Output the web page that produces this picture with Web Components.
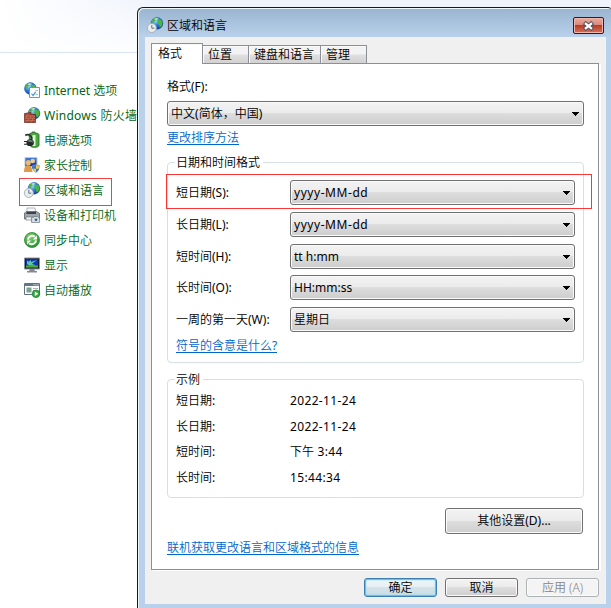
<!DOCTYPE html>
<html lang="zh-CN"><head><meta charset="utf-8"><title>区域和语言</title>
<style>
html,body{margin:0;width:611px;height:608px;overflow:hidden;background:#fff}
body{font:350 12px/16px "Noto Sans","Noto Sans CJK SC",sans-serif;color:#000}
</style></head><body>
<control-page></control-page>
<script>
const define=(name,html)=>customElements.define(name,class extends HTMLElement{
 connectedCallback(){ if(this.shadowRoot)return;
  const t=document.createElement('template');
  t.innerHTML=typeof html==='function'?html(this):html;
  this.attachShadow({mode:'open'}).append(t.content.cloneNode(true));
 }});

const globe=`<circle cx="10" cy="6.3" r="5.9" fill="url(#g)" stroke="#174f9c" stroke-width=".5"/><path d="M6 2.3Q8 .5 10 1L9.4 3 7.5 4.2 6.8 6.6 5 5.2zM11 3l3-.6 1.6 3.4-1 3.4-2 1.4-.6-3-1.8-1.6z" fill="#4eb53c"/><path d="M7 1.8Q9 .8 11.5 1.6L9 3z" fill="#d5f6cb"/>`;
const grad=`<defs><radialGradient id="g" cx=".35" cy=".3" r=".8"><stop stop-color="#9fe3ff"/><stop offset=".45" stop-color="#2c83de"/><stop offset="1" stop-color="#0a2d8c"/></radialGradient><linearGradient id="m" x2="0" y2="1"><stop stop-color="#3f86e8"/><stop offset="1" stop-color="#0a2aa0"/></linearGradient><radialGradient id="s" cx=".4" cy=".3" r=".8"><stop stop-color="#7fd568"/><stop offset="1" stop-color="#1c8a2c"/></radialGradient></defs>`;
const icons={
 internet:`<g transform="translate(-3.6 .2)">${globe}</g><path d="M5.5 5.5h10v10h-10z" fill="#fbfdff" stroke="#7892aa"/><path d="M11.5 8.5H14M11.5 12.5H14" stroke="#a9bccb"/><path d="M7.5 11.5l1.6 2 2.6-3.6" fill="none" stroke="#3e9ac9" stroke-width="1.2"/>`,
 firewall:`${globe}<path d="M.5 6.5l6.5-1v2h4.5v8H.5z" fill="#a5442f" stroke="#6d2218" stroke-width=".7"/><path d="M1 9h10M1 11.3h10M1 13.5h10M4 6.5V9M8 8v1M2.5 9v2.3M6.5 9v2.3M10 9v2.3M4.5 11.3v2.2M8.5 11.3v2.2M3 13.5v2M7 13.5v2" stroke="#d58d76" stroke-width=".5"/>`,
 power:`<path d="M5 2.6Q5 1.2 8 1V0h3v1q4 0 4 1.7V13q0 2.3-4.5 2.3T6 13z" fill="#4aa83c" stroke="#2b5930" stroke-width=".8"/><path d="M8.5 3h3v11h-3z" fill="#d8f8cd"/><path d="M1.2 3.2Q5 1.6 7 4.4t-1 4.2" fill="none" stroke="#292f32" stroke-width="1.7"/><path d="M0 9h3l1-1.5h3.6l2.2 1.8v2.9L7.6 14H4l-1.2-1.3H0v-1h2.5V10H0z" fill="#24292c"/><path d="M4.3 9h3l1.3 1" stroke="#b8bfc2" fill="none"/>`,
 family:`<path d="M1 .5h12v9H1z" fill="url(#m)" stroke="#b9c8d7"/><circle cx="4.3" cy="5.7" r="2.6" fill="#edbb69"/><path d="M0 15q0-7 4-7t4.5 7z" fill="#df9a4a"/><circle cx="8.7" cy="4" r="2.3" fill="#edc993"/><path d="M8 8.5q2.5 0 4-1 1.5 1 3.5 1 0 5-3.7 7Q8 13.5 8 8.5z" fill="#f4ce49" stroke="#7986a0" stroke-width=".6"/><path d="M12 7.7v4H8.4q-.4-1.4-.4-3 2.3 0 4-1zM12 11.7h3.3q-1 2.7-3.3 3.8z" fill="#3679c9"/>`,
 region:globe+`<circle cx="4.8" cy="11" r="4.5" fill="#e8edf0" stroke="#a5adb3" stroke-width=".9"/><path d="M4.8 8v3.2h2.5" fill="none" stroke="#59656d" stroke-width=".9"/>`,
 printer:`<path d="M3 1h8l1 5H3z" fill="#f8f9fa" stroke="#9098a0" stroke-width=".7"/><path d="M.5 6l2-1.5h10l3 2V12h-15z" fill="#a0a7ac" stroke="#4b5258" stroke-width=".7"/><path d="M3 5h9v2H2z" fill="#3c4348"/><path d="M2 10h10v3H2z" fill="#f1f3f4" stroke="#626a70" stroke-width=".6"/><path d="M7.5 10.5h2l1-1h3l1 1h1v5h-8z" fill="#d5dade" stroke="#5d666d" stroke-width=".6"/><circle cx="12" cy="12.8" r="1.8" fill="#345f8b" stroke="#eef4f8" stroke-width=".7"/>`,
 sync:`<circle cx="8" cy="8" r="7.5" fill="url(#s)" stroke="#26842f" stroke-width=".8"/><path d="M4 7.6a4.1 4.1 0 0 1 6.8-2.8M12 8.4a4.1 4.1 0 0 1-6.8 2.8" fill="none" stroke="#fff" stroke-width="2"/><path d="M12.9 3.5v4.1H8.8zM3.1 12.5V8.4h4.1z" fill="#fff"/>`,
 display:`<path d="M.5 1h15v11H.5z" fill="#161d2c" stroke="#8790a0"/><path d="M2 2.3h12v8.2H2z" fill="#0c38b8"/><path d="M2 8.5h12v2H2z" fill="#4aad35"/><path d="M3 7V3.5l1.5 1.2L7 3v2l6-2-5 3.8 4 1.7H5z" fill="#5fc79f"/><path d="M6 12h4l1 2h2v1.5H3V14h2z" fill="#828b95"/>`,
 autoplay:`<path d="M.5 1.5h15v11H.5z" fill="#fff" stroke="#62717d"/><path d="M1 2h14v2H1z" fill="#60788a"/><path d="M2.5 5.5h5v5h-5z" fill="#7ba18f"/><path d="M9 6.5h5M9 8.5h4" stroke="#a9b6bf"/><path d="M9.5 2.8h1M11.5 2.8h1M13.5 2.8h1" stroke="#fff"/><circle cx="12" cy="11.8" r="3.8" fill="#38a841" stroke="#167c29" stroke-width=".7"/><path d="M10.8 9.6l3.5 2.2-3.5 2.2z" fill="#fff"/>`
};
define('ui-icon',el=>`<style>:host{display:block;width:16px;height:16px;flex:none}svg{display:block;overflow:visible}</style><svg width="16" height="16" viewBox="0 0 16 16">${grad}${icons[el.getAttribute('name')]}</svg>`);

/* Latin runs are set in the regular weight, beside lighter Chinese text. */
define('ui-latin',`<style>:host{display:inline;font-weight:400}</style><slot></slot>`);

define('nav-item',`<style>:host{display:flex;align-items:center;height:25px;gap:4px;color:#006614;white-space:nowrap}::slotted(ui-icon){margin-top:-1px}</style><slot name="icon"></slot><slot></slot>`);
define('nav-list',()=>`<style>:host{display:flex;flex-direction:column;padding:25px 0 0 24px;width:140px;box-sizing:border-box}
.mark{position:absolute;left:19px;top:178px;width:91px;height:26px;border:1px solid #f24141}
span{letter-spacing:var(--ls,0)}</style>${
[['internet','<ui-latin>Internet</ui-latin> 选项'],['firewall','<ui-latin>Windows</ui-latin> 防火墙',.25],['power','电源选项'],['family','家长控制'],['region','区域和语言'],['printer','设备和打印机'],['sync','同步中心'],['display','显示'],['autoplay','自动播放']].map(([i,t,ls=0])=>`<nav-item><ui-icon slot="icon" name="${i}"></ui-icon><span style="--ls:${ls}px">${t}</span></nav-item>`).join('')}<div class="mark"></div>`);

define('ui-tab',`<style>:host{display:block;box-sizing:border-box;height:18px;width:var(--tab-w);padding:1px 0 0 5px;border:1px solid #8c8e98;border-left-width:0;border-bottom:0;background:linear-gradient(#f3f3f3 0 45%,#dedede 55%,#d2d2d2);box-shadow:inset 1px 1px #fafafa;white-space:nowrap}
:host([active]){height:21px;padding:2px 0 0 6px;border-left-width:1px;background:#fff;margin-bottom:-1px;position:relative}</style><slot></slot>`);

define('ui-select',`<style>:host{display:flex;justify-content:space-between;align-items:center;box-sizing:border-box;height:25px;width:var(--select-w,285px);border:1px solid #707070;border-radius:3px;padding:0 4px 0 3px;background:linear-gradient(#f3f3f3,#ebebeb 48%,#dddddd 50%,#cdcdcd);box-shadow:inset 0 0 0 1px #fafafa;white-space:nowrap}
:host([latin]){font-weight:400}
svg{display:block;flex:none}span{letter-spacing:var(--ls,0)}</style><span><slot></slot></span><svg width="7" height="4" shape-rendering="crispEdges"><path d="M0 0h7v1H0zM1 1h5v1H1zM2 2h3v1H2zM3 3h1v1H3z"/></svg>`);

define('ui-link',`<style>:host{display:block;color:#0066cc;height:16px;white-space:nowrap}span{display:inline-block;height:14px;line-height:16px;border-bottom:1px solid #0066cc}</style><span><slot></slot></span>`);

define('ui-button',`<style>:host{display:flex;align-items:center;justify-content:center;box-sizing:border-box;width:var(--btn-w,73px);height:var(--btn-h,19px);border:1px solid #707070;border-radius:3px;background:linear-gradient(#f3f3f3,#ebebeb 48%,#ddd 50%,#cfcfcf);box-shadow:inset 0 0 0 1px #fbfbfb;white-space:nowrap}
:host([primary]){border-color:#3c7fb1;box-shadow:inset 0 0 0 1px #45d1f5,inset 0 0 2px 1px #8bdcf4;background:linear-gradient(#f1f6f8,#e6eff3 48%,#d5e3e9 50%,#c9dde5)}
:host([disabled]){border-color:#adb2b5;background:#f4f4f4;color:#858585}</style><slot></slot>`);

define('ui-group',el=>`<style>:host{display:block;box-sizing:border-box;width:417px;height:var(--group-h);border:1px solid #d5dfe5;border-radius:4px;padding:0 8px}
.t{display:block;width:max-content;height:16px;margin:-8px 0 0 -1px;padding:0 3px 0 1px;background:#fff}</style><span class="t">${el.getAttribute('label')}</span><slot></slot>`);

define('form-row',`<style>:host{display:grid;grid-template-columns:114px 1fr;align-items:center;height:25px;white-space:nowrap}</style><slot></slot>`);

define('format-panel',`<style>:host{display:block;box-sizing:border-box;width:448px;height:507px;border:1px solid #8c8e98;padding:15px 0 0 15px;background:#fff;box-shadow:2px 1px #fff}
.fields{display:flex;flex-direction:column;gap:7px;margin-top:9px}.fields :nth-child(3){margin-bottom:-1px}
.values{display:flex;flex-direction:column;gap:.8px;margin-top:.4px}
.values span+span{letter-spacing:.35px;font-weight:400}
.values .cjk{font-weight:350;letter-spacing:0}
.mark{position:absolute;left:28px;top:166px;width:424px;height:33px;border:1px solid #fa3636;z-index:2}
ui-group+ui-group{margin-top:16px}</style>
<div>格式<ui-latin>(F):</ui-latin></div>
<ui-select style="--select-w:417px;margin-top:6px">中文<ui-latin>(</ui-latin>简体，中国<ui-latin>)</ui-latin></ui-select>
<ui-link style="margin-top:4px">更改排序方法</ui-link>
<ui-group label="日期和时间格式" style="--group-h:201px;margin-top:16px"><div class="fields">
<form-row><span>短日期<ui-latin>(S):</ui-latin></span><ui-select latin style="--ls:.55px">yyyy-MM-dd</ui-select></form-row>
<form-row><span>长日期<ui-latin>(L):</ui-latin></span><ui-select latin style="--ls:.55px">yyyy-MM-dd</ui-select></form-row>
<form-row><span>短时间<ui-latin>(H):</ui-latin></span><ui-select latin>tt h:mm</ui-select></form-row>
<form-row><span>长时间<ui-latin>(O):</ui-latin></span><ui-select latin>HH:mm:ss</ui-select></form-row>
<form-row><span>一周的第一天<ui-latin>(W):</ui-latin></span><ui-select>星期日</ui-select></form-row></div>
<ui-link style="margin-top:6px">符号的含意是什么<ui-latin>?</ui-latin></ui-link></ui-group>
<ui-group label="示例" style="--group-h:119px"><div class="values">
<form-row><span>短日期<ui-latin>:</ui-latin></span><span>2022-11-24</span></form-row>
<form-row><span>长日期<ui-latin>:</ui-latin></span><span>2022-11-24</span></form-row>
<form-row><span>短时间<ui-latin>:</ui-latin></span><span><span class="cjk">下午</span> 3:44</span></form-row>
<form-row><span>长时间<ui-latin>:</ui-latin></span><span>15:44:34</span></form-row></div></ui-group>
<ui-button style="--btn-w:138px;--btn-h:26px;margin:10px 0 0 278px">其他设置<ui-latin>(D)...</ui-latin></ui-button>
<ui-link style="margin-top:6px">联机获取更改语言和区域格式的信息</ui-link>
<div class="mark"></div>`);

define('region-dialog',`<style>:host{position:absolute;left:137px;top:7px;width:474px;height:620px;box-sizing:border-box;border:solid #15191d;border-width:1px 0 0 1px;border-radius:6px 3px 0 0;background:linear-gradient(#99b4d1,#b9d1ea 29px,#b9d1ea 500px);box-shadow:inset 1px 1px #eef6fd;overflow:hidden}
header{display:flex;height:29px;padding:0 7px 0 9px;box-sizing:border-box;align-items:center;gap:4px}
header ui-icon{margin-top:4px}header span{flex:1;padding-top:6px}
.close{width:31px;height:17px;box-sizing:border-box;border:1px solid #43131c;border-radius:2px;margin-top:6px;background:linear-gradient(#e9aaa0,#d98777 47%,#b83c25 50%,#d4735f);box-shadow:inset 0 0 0 1px #efb7ab;display:grid;place-items:center}
.client{margin-left:7px;width:461px;height:567px;box-sizing:border-box;background:#f0f0f0;padding:6px 0 0 6px}
nav{display:flex;align-items:flex-end;height:20px;position:relative;z-index:1}
footer{display:flex;gap:8px;margin:8px 0 0 213px}</style>
<header><ui-icon name="region"></ui-icon><span>区域和语言</span><div class="close"><svg width="13" height="10" viewBox="0 0 13 10"><path d="M2.2 1.5l8.6 7M10.8 1.5l-8.6 7" stroke="#4d5361" stroke-width="4.2"/><path d="M3 2.1l7 5.8M10 2.1L3 7.9" stroke="#fff" stroke-width="2.3"/></svg></div></header>
<div class="client"><nav><ui-tab active style="--tab-w:52px">格式</ui-tab><ui-tab style="--tab-w:46px">位置</ui-tab><ui-tab style="--tab-w:72px">键盘和语言</ui-tab><ui-tab style="--tab-w:46px">管理</ui-tab></nav>
<format-panel></format-panel>
<footer><ui-button primary>确定</ui-button><ui-button>取消</ui-button><ui-button disabled>应用 (A)</ui-button></footer></div>`);

define('control-page',`<style>:host{display:block;width:611px;height:608px;overflow:hidden;position:relative;background:#fff}
.top{height:53px;border-bottom:1px solid #d9e5f6;box-sizing:border-box;background:linear-gradient(90deg,#fff 0,#fff0 180px),linear-gradient(#edf2fb,#fcfdff)}</style>
<div class="top"></div><nav-list></nav-list><region-dialog></region-dialog>`);
</script></body></html>
